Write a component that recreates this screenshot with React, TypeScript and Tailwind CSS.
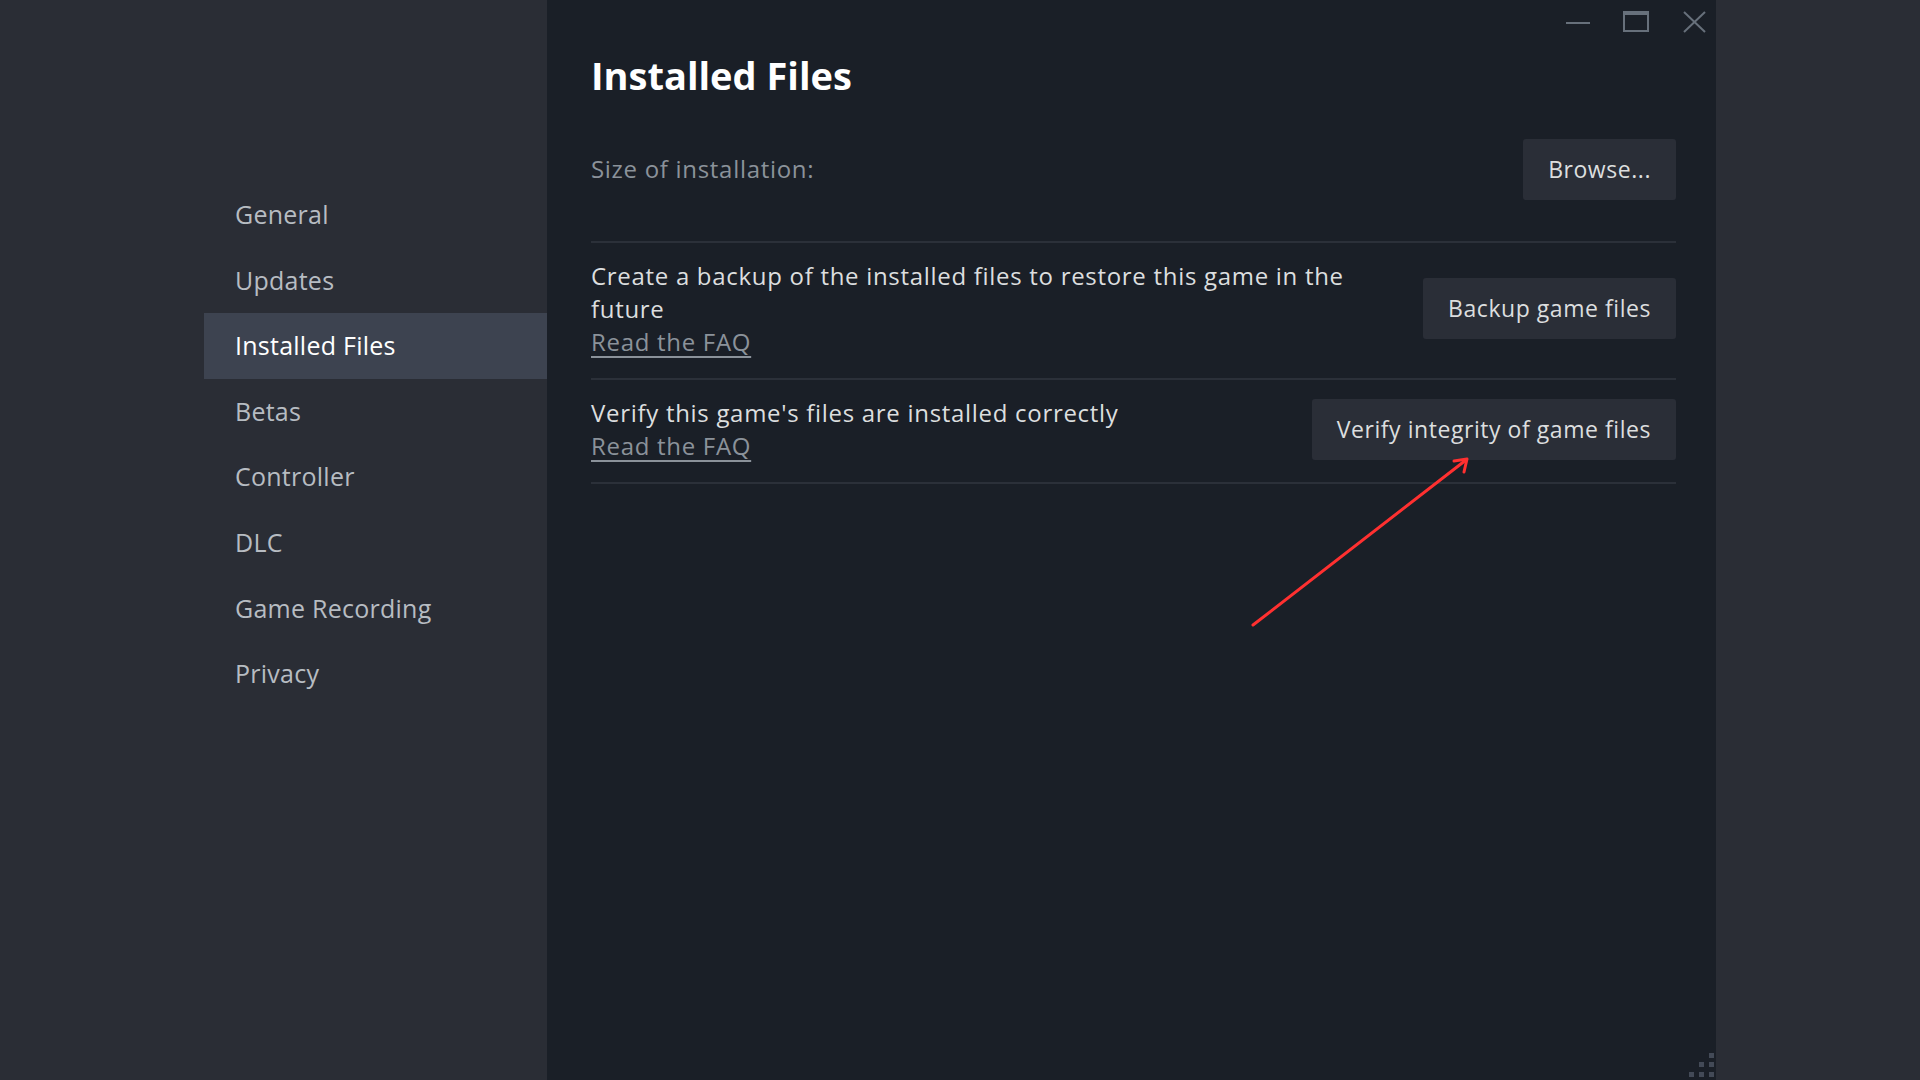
import { useState } from "react";

const NAV_ITEMS = [
  "General",
  "Updates",
  "Installed Files",
  "Betas",
  "Controller",
  "DLC",
  "Game Recording",
  "Privacy",
];

function WindowControls() {
  return (
    <svg className="absolute top-0 right-0" width="160" height="45" viewBox="0 0 160 45" fill="none">
      {/* minimize */}
      <line x1="10" y1="23" x2="34" y2="23" stroke="#67707b" strokeWidth="2" />
      {/* maximize */}
      <rect x="68" y="12" width="24" height="19" stroke="#67707b" strokeWidth="2" />
      <rect x="67" y="11" width="26" height="4" fill="#67707b" />
      {/* close */}
      <line x1="128" y1="12" x2="149" y2="32" stroke="#67707b" strokeWidth="2" />
      <line x1="149" y1="12" x2="128" y2="32" stroke="#67707b" strokeWidth="2" />
    </svg>
  );
}

function ResizeGrip() {
  const dots = [
    [23, 3],
    [13, 12],
    [23, 12],
    [3, 22],
    [13, 22],
    [23, 22],
  ];
  return (
    <svg className="absolute right-0 bottom-0" width="30" height="30" viewBox="0 0 30 30">
      {dots.map(([x, y], i) => (
        <rect key={i} x={x} y={y} width="5" height="5" fill="#434a57" />
      ))}
    </svg>
  );
}

// red annotation pointing at the verify button
function Arrow() {
  return (
    <svg className="absolute left-[693px] top-[450px]" width="240" height="190" viewBox="0 0 240 190" fill="none">
      <line x1="13" y1="175" x2="226" y2="10" stroke="#ff3030" strokeWidth="3" strokeLinecap="round" />
      <polyline points="214,11 227,9 224,22" stroke="#ff3030" strokeWidth="3" strokeLinecap="round" strokeLinejoin="round" />
    </svg>
  );
}

function Button({ children }: { children: React.ReactNode }) {
  return (
    <button className="h-[61px] shrink-0 rounded-[3px] bg-[#2a2e37] px-[25px] text-[23px] font-medium tracking-[0.55px] text-[#dcdedf]">
      {children}
    </button>
  );
}

function FaqLink() {
  return (
    <a href="#" className="text-[#8b929a] underline underline-offset-[5px] decoration-[#8b929a]">
      Read the FAQ
    </a>
  );
}

export default function App() {
  const [active, setActive] = useState("Installed Files");

  return (
    <div
      className="flex h-screen w-screen overflow-hidden bg-[#2a2d35]"
      style={{ fontFamily: "'Open Sans', 'Noto Sans', sans-serif" }}
    >
      {/* Left — settings nav */}
      <div className="w-[547px] shrink-0 pl-[204px] pt-[182px]">
        <nav className="flex flex-col">
          {NAV_ITEMS.map((item) => (
            <button
              key={item}
              onClick={() => setActive(item)}
              className={
                item === active
                  ? "flex h-[65.6px] items-center bg-[#3d4350] pl-[31px] text-left text-[25px] tracking-[0.25px] text-white"
                  : "flex h-[65.6px] items-center pl-[31px] text-left text-[25px] tracking-[0.25px] text-[#b7bcc2]"
              }
            >
              {item}
            </button>
          ))}
        </nav>
      </div>

      {/* Main — Installed Files panel */}
      <div className="relative w-[1169px] shrink-0 bg-[#1a1f27] pl-[44px] pr-[40px]">
        <WindowControls />

        <h1 className="pt-[56px] text-[38px] font-bold leading-[38px] text-white">Installed Files</h1>

        <div className="mt-[44px] flex h-[62px] items-center justify-between">
          <span className="text-[24px] tracking-[0.7px] text-[#8b929a]">Size of installation:</span>
          <Button>Browse...</Button>
        </div>

        <div className="mt-[41px] border-t-2 border-[#2b3039]">
          <div className="flex items-center justify-between gap-6 border-b-2 border-[#2b3039] pt-4 pb-5">
            <div className="flex-1 text-[24px] leading-[33px] tracking-[0.7px] text-[#dcdedf]">
              <p>Create a backup of the installed files to restore this game in the future</p>
              <FaqLink />
            </div>
            <Button>Backup game files</Button>
          </div>

          <div className="flex items-center justify-between gap-6 border-b-2 border-[#2b3039] pt-4 pb-5">
            <div className="flex-1 text-[24px] leading-[33px] tracking-[0.7px] text-[#dcdedf]">
              <p>Verify this game's files are installed correctly</p>
              <FaqLink />
            </div>
            <Button>Verify integrity of game files</Button>
          </div>
        </div>

        <Arrow />
        <ResizeGrip />
      </div>

      {/* Right — outside the dialog */}
      <div className="flex-1 bg-[#2a2d35]" />
    </div>
  );
}
